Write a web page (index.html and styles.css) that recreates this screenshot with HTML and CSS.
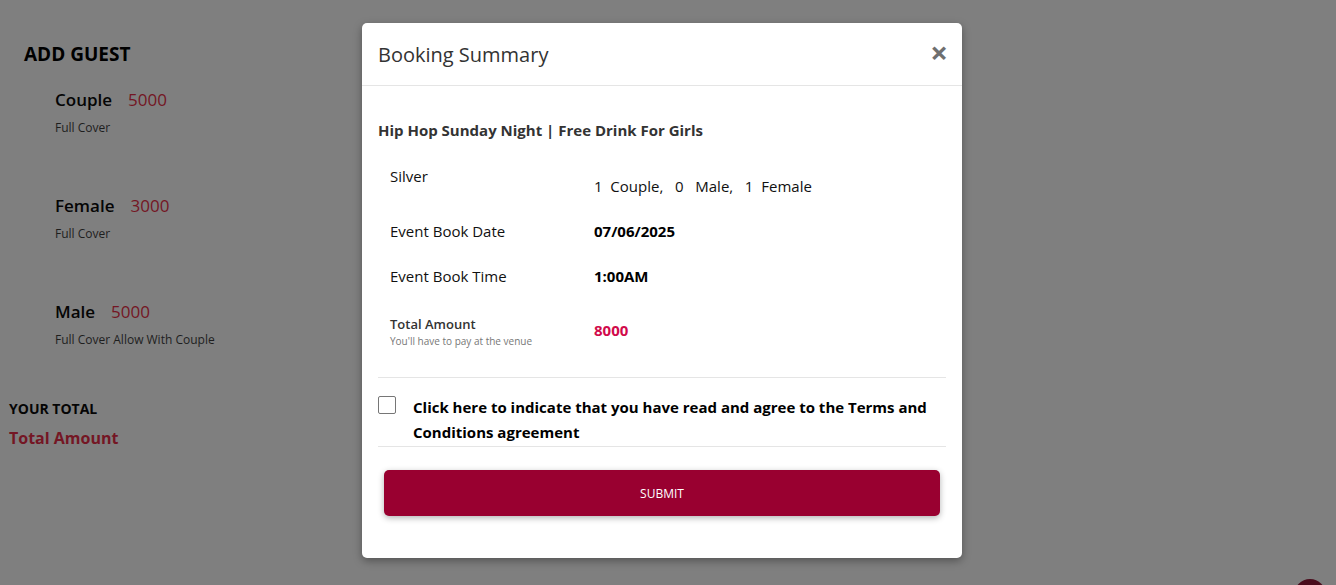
FILE: index.html
```html
<!DOCTYPE html>
<html lang="en">
<head>
<meta charset="utf-8">
<title>Booking Summary</title>
<link rel="stylesheet" href="styles.css">
</head>
<body>
<main class="page">
  <h2 class="add-title">ADD GUEST</h2>
  <section class="guest">
    <div class="guest-head"><span class="guest-name">Couple</span><span class="guest-price">5000</span></div>
    <div class="guest-note">Full Cover</div>
  </section>
  <section class="guest">
    <div class="guest-head"><span class="guest-name">Female</span><span class="guest-price">3000</span></div>
    <div class="guest-note">Full Cover</div>
  </section>
  <section class="guest">
    <div class="guest-head"><span class="guest-name">Male</span><span class="guest-price">5000</span></div>
    <div class="guest-note">Full Cover Allow With Couple</div>
  </section>
  <div class="your-total">YOUR TOTAL</div>
  <div class="total-amount">Total Amount</div>
</main>
<div class="fab"></div>

<div class="overlay">
  <div class="modal">
    <header class="modal-header">
      <h3 class="modal-title">Booking Summary</h3>
      <span class="close">&times;</span>
    </header>
    <div class="modal-body">
      <div class="event-name">Hip Hop Sunday Night | Free Drink For Girls</div>
      <div class="row row-ticket">
        <div class="label">Silver</div>
        <div class="value value-tickets">1&nbsp; Couple, &nbsp; 0 &nbsp; Male, &nbsp; 1&nbsp; Female</div>
      </div>
      <div class="row">
        <div class="label">Event Book Date</div>
        <div class="value value-bold">07/06/2025</div>
      </div>
      <div class="row">
        <div class="label">Event Book Time</div>
        <div class="value value-bold">1:00AM</div>
      </div>
      <div class="row row-total">
        <div class="label">
          <div class="total-label">Total Amount</div>
          <div class="total-sub">You'll have to pay at the venue</div>
        </div>
        <div class="value value-amount">8000</div>
      </div>
      <label class="terms">
        <span class="checkbox"></span>
        <span class="terms-text">Click here to indicate that you have read and agree to the Terms and Conditions agreement</span>
      </label>
      <div class="actions">
        <button class="submit" type="button">SUBMIT</button>
      </div>
    </div>
  </div>
</div>
</body>
</html>
```
FILE: styles.css
```css
html, body {
  margin: 0;
  padding: 0;
}
body {
  background: #7f7f7f;
  font-family: "Open Sans", "Noto Sans", sans-serif;
  color: #000;
  width: 1336px;
  height: 585px;
  overflow: hidden;
  position: relative;
}
.page {
  padding: 40px 0 0 9px;
}
.add-title {
  margin: 0 0 0 15px;
  font-size: 19px;
  font-weight: 700;
  line-height: 28px;
  color: #000;
}
.guest {
  margin: 20px 0 0 46px;
  height: 86px;
}
.guest + .guest {
  margin-top: 20px;
}
.guest-head {
  display: flex;
  gap: 16px;
  font-size: 17px;
  font-weight: 600;
  line-height: 24px;
}
.guest-name { color: #050505; }
.guest-price { color: #741624; font-weight: 500; }
.guest-note {
  margin-top: 8px;
  font-size: 12px;
  line-height: 16px;
  color: #1e1e1e;
}
.your-total {
  margin-top: 13px;
  font-size: 14px;
  font-weight: 700;
  line-height: 20px;
  color: #050505;
}
.total-amount {
  margin-top: 8px;
  font-size: 16px;
  font-weight: 700;
  line-height: 22px;
  color: #741624;
}
.fab {
  position: absolute;
  right: 10px;
  bottom: -26px;
  width: 32px;
  height: 32px;
  border-radius: 50%;
  background: #4a0c1c;
}
.overlay {
  position: absolute;
  inset: 0;
  display: flex;
  justify-content: center;
  align-items: flex-start;
  padding-top: 23px;
  padding-right: 12px;
  box-sizing: border-box;
}
.modal {
  width: 600px;
  background: #fff;
  border-radius: 5px;
  box-shadow: 0 3px 9px rgba(0,0,0,0.35);
}
.modal-header {
  height: 62px;
  border-bottom: 1px solid #e5e5e5;
  display: flex;
  align-items: center;
  justify-content: space-between;
  padding: 0 14px 0 16px;
}
.modal-title {
  margin: 0;
  font-size: 20px;
  font-weight: 500;
  color: #333;
}
.close {
  font-size: 31px;
  font-weight: 700;
  color: #6f6f6f;
  line-height: 1;
  margin-top: -3px;
}
.modal-body {
  padding: 33px 16px 42px;
}
.event-name {
  font-size: 15px;
  font-weight: 700;
  color: #333;
  line-height: 22px;
}
.row {
  display: grid;
  grid-template-columns: 204px 1fr;
  padding-left: 12px;
  margin-top: 24px;
  font-size: 15px;
  line-height: 22px;
}
.row + .row { margin-top: 23px; }
.label { color: #111; }
.value-tickets { padding-top: 10px; color: #111; }
.value-bold { font-weight: 700; color: #000; }
.row-total { margin-top: 28px !important; }
.total-label {
  font-size: 13px;
  font-weight: 600;
  color: #333;
  line-height: 18px;
}
.total-sub {
  font-size: 10px;
  color: #777;
  line-height: 16px;
}
.value-amount {
  padding-top: 4px;
  font-weight: 700;
  color: #d10a4b;
}
.terms {
  display: flex;
  gap: 17px;
  margin-top: 28px;
  padding: 17px 0 0;
  border-top: 1px solid #e5e5e5;
  border-bottom: 1px solid #e5e5e5;
  height: 70px;
  box-sizing: border-box;
}
.checkbox {
  flex: none;
  width: 16px;
  height: 16px;
  border: 1px solid #767676;
  border-radius: 2px;
  margin-top: 1px;
}
.terms-text {
  font-size: 15px;
  font-weight: 700;
  line-height: 25px;
  color: #000;
}
.actions {
  padding: 23px 6px 0;
}
.submit {
  display: block;
  width: 100%;
  height: 46px;
  border: none;
  border-radius: 5px;
  background: #990030;
  color: #fff;
  font-family: inherit;
  font-size: 12px;
  box-shadow: 0 2px 6px rgba(0,0,0,0.3);
}
```
